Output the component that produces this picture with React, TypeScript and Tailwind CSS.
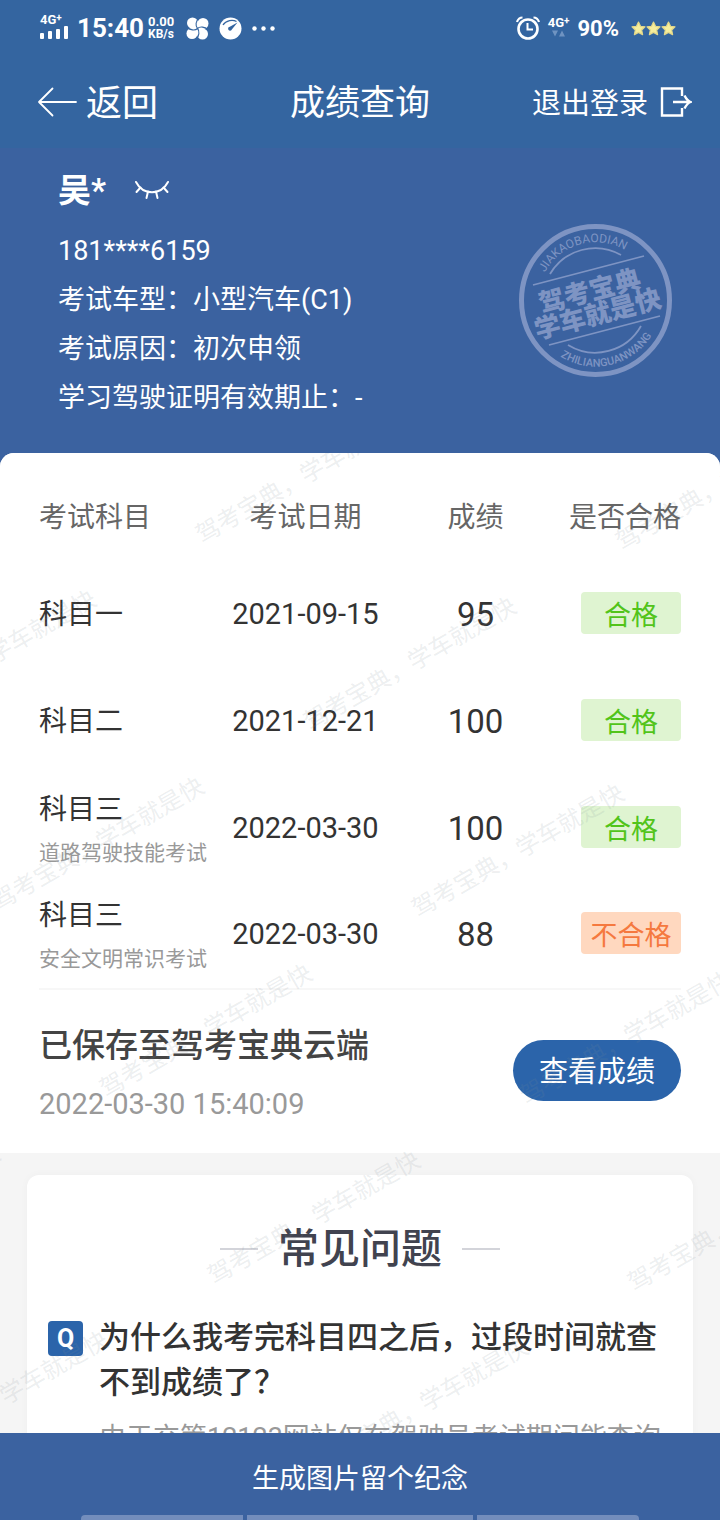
type Result = {
  subject: string;
  note?: string;
  date: string;
  score: number;
  passed: boolean;
};

const results: Result[] = [
  { subject: "科目一", date: "2021-09-15", score: 95, passed: true },
  { subject: "科目二", date: "2021-12-21", score: 100, passed: true },
  {
    subject: "科目三",
    note: "道路驾驶技能考试",
    date: "2022-03-30",
    score: 100,
    passed: true,
  },
  {
    subject: "科目三",
    note: "安全文明常识考试",
    date: "2022-03-30",
    score: 88,
    passed: false,
  },
];

const StatusBar = () => (
  <div className="flex h-14 items-center justify-between pl-10 pr-11 font-bold">
    <div className="flex items-center">
      <div className="flex flex-col pb-1">
        <span className="flex text-[13px] leading-[12px]">
          4G<span className="text-[10px] leading-[8px]">+</span>
        </span>
        <svg width="29" height="13" viewBox="0 0 29 13" fill="currentColor">
          <rect x="0" y="7" width="4" height="6" rx="1" />
          <rect x="8" y="5" width="4" height="8" rx="1" />
          <rect x="16" y="3" width="4" height="10" rx="1" />
          <rect x="24" y="0" width="4" height="13" rx="1" />
        </svg>
      </div>
      <span className="ml-2 text-[26px] leading-8">15:40</span>
      <div className="ml-1 flex flex-col text-[13px] leading-[13px]">
        <span>0.00</span>
        <span className="text-[12px]">KB/s</span>
      </div>
      <svg className="ml-3" width="23" height="23" viewBox="0 0 23 23">
        <g fill="currentColor">
          <circle cx="6.5" cy="6" r="5.5" />
          <circle cx="17" cy="6.5" r="5.5" />
          <circle cx="6" cy="16.5" r="5.5" />
          <circle cx="16.5" cy="17" r="5.5" />
          <rect x="6" y="6" width="11" height="11" />
        </g>
        <path
          d="M11.5 11.5C9 9 10 4 12.5 1M11.5 11.5C14 9 19 10 22 12.5M11.5 11.5C14 14 13 19 10.5 22M11.5 11.5C9 14 4 13 1 10.5"
          fill="none"
          stroke="#3465a0"
          strokeWidth="1.1"
        />
      </svg>
      <svg className="ml-2.5" width="23" height="23" viewBox="0 0 23 23">
        <circle cx="11.5" cy="11.5" r="11" fill="currentColor" />
        <path
          d="M4 8C7 3 14 2.500 17.5 4.5"
          fill="none"
          stroke="#3465a0"
          strokeWidth="1.3"
        />
        <path d="M18.5 5.5L13 12.3A2 2 0 1 1 10.8 9.8Z" fill="#3465a0" />
      </svg>
      <svg className="ml-2.5" width="23" height="5" viewBox="0 0 23 5" fill="currentColor">
        <circle cx="2.5" cy="2.5" r="2.2" />
        <circle cx="11.5" cy="2.5" r="2.2" />
        <circle cx="20.5" cy="2.5" r="2.2" />
      </svg>
    </div>
    <div className="flex items-center">
      <svg
        width="24"
        height="24"
        viewBox="0 0 24 24"
        fill="none"
        stroke="currentColor"
        strokeWidth="2.6"
      >
        <circle cx="12" cy="13" r="9.5" />
        <path d="M11.5 7V13.5H17" strokeWidth="2" />
        <path d="M1 6C2 3 4 1.5 6.5 1.5M23 6C22 3 20 1.5 17.5 1.5" strokeWidth="2.2" />
      </svg>
      <div className="ml-2 flex flex-col items-center pb-1">
        <span className="flex text-[13px] leading-[14px]">
          4G<span className="text-[10px] leading-[9px]">+</span>
        </span>
        <svg width="13" height="7" viewBox="0 0 13 7" fill="#6f93c1">
          <path d="M0 0.5H6L3 6.5ZM7 6.5H13L10 0.5Z" />
        </svg>
      </div>
      <span className="ml-2 pt-0.5 text-[22px] leading-7">90%</span>
      <div className="ml-3 flex">
        {[0, 1, 2].map((star) => (
          <svg key={star} width="15" height="15" viewBox="0 0 15 15">
            <path
              d="M7.5 1L9.5 5.3L14 5.8L10.7 9L11.6 13.6L7.5 11.4L3.4 13.6L4.3 9L1 5.8L5.5 5.3Z"
              fill="#f6ee9c"
              stroke="#e3d88a"
              strokeWidth="1.2"
              strokeLinejoin="round"
            />
          </svg>
        ))}
      </div>
    </div>
  </div>
);

const NavBar = () => (
  <nav className="grid h-[92px] grid-cols-[1fr_auto_1fr] items-center leading-[48px]">
    <button type="button" className="flex items-center gap-2 pl-[37px] text-[36px]">
      <svg
        width="41"
        height="30"
        viewBox="0 0 41 30"
        fill="none"
        stroke="currentColor"
        strokeWidth="1.8"
        strokeLinecap="round"
        strokeLinejoin="round"
      >
        <path d="M39 15H2M15.5 1.5L2 15L15.5 28.5" />
      </svg>
      <span className="pt-1">返回</span>
    </button>
    <h1 className="pt-1 text-[35px]">成绩查询</h1>
    <button
      type="button"
      className="flex items-center gap-3 justify-self-end pr-7 text-[29px]"
    >
      <span className="pt-1">退出登录</span>
      <svg
        width="32"
        height="30"
        viewBox="0 0 32 30"
        fill="none"
        stroke="currentColor"
        strokeWidth="2.4"
      >
        <path d="M22 9V1.5H2V28.5H22V21" />
        <path d="M13 15H30M24.5 8.5C26 11.500 28 14 30.5 15C28 16 26 18.5 24.5 21.5" />
      </svg>
    </button>
  </nav>
);

const Stamp = () => (
  <svg
    className="mt-6 shrink-0"
    width="153"
    height="153"
    viewBox="0 0 153 153"
    aria-hidden="true"
  >
    <defs>
      <path id="stamp-top" d="M25.8 48.4A58 58 0 0 1 122 40" />
      <path id="stamp-bottom" d="M41.5 132.5A66 66 0 0 0 140 95" />
    </defs>
    <g fill="none" stroke="#7e94c3">
      <circle cx="76.5" cy="76.5" r="74" strokeWidth="5" />
      <g strokeWidth="1.8">
        <path d="M14 61L125 32M30 121L141 92" />
        <path d="M31 50A52.5 52.5 0 0 1 102 31M49 121A52.5 52.5 0 0 0 122 102" />
      </g>
    </g>
    <g fill="#7e94c3">
      <text fontSize="12">
        <textPath href="#stamp-top">JIAKAOBAODIAN</textPath>
      </text>
      <text fontSize="11" fontWeight="500">
        <textPath href="#stamp-bottom">ZHILIANGUANWANG</textPath>
      </text>
      <g fontSize="26" fontWeight="900" textAnchor="middle">
        <text transform="translate(73 76) rotate(-14.7)">驾考宝典</text>
        <text transform="translate(81 99) rotate(-14.7)">学车就是快</text>
      </g>
    </g>
  </svg>
);

const Profile = () => (
  <section className="flex items-center justify-between pb-[30px] pl-[58px] pr-12 pt-[5px]">
    <div className="text-[27px] leading-[49px]">
      <div className="flex h-[74px] items-center gap-7">
        <h2 className="text-[33px] font-bold">吴*</h2>
        <button type="button" aria-label="显示姓名">
          <svg
            width="36"
            height="20"
            viewBox="0 0 36 20"
            fill="none"
            stroke="currentColor"
            strokeWidth="2"
            strokeLinecap="round"
          >
            <path d="M2 2C9 15.5 27 15.5 34 2" />
            <path d="M6.5 7.5L2.5 12M14 11.5L12.5 18M22 11.5L23.5 18M29.5 7.5L33.5 12" />
          </svg>
        </button>
      </div>
      <p>181****6159</p>
      <p>考试车型：小型汽车(C1)</p>
      <p>考试原因：初次申领</p>
      <p>学习驾驶证明有效期止：-</p>
    </div>
    <Stamp />
  </section>
);

const ResultsTable = () => (
  <table className="w-full table-fixed border-b-2 border-[#f7f7f7] text-center text-[29px] text-[#333]">
    <thead>
      <tr className="h-[86px] text-[28px] text-[#666]">
        <th className="w-[28%] text-left font-normal">考试科目</th>
        <th className="w-[27%] font-normal">考试日期</th>
        <th className="w-[26%] font-normal">成绩</th>
        <th className="w-[19%] whitespace-nowrap text-right font-normal">是否合格</th>
      </tr>
    </thead>
    <tbody>
      {results.map((result) => (
        <tr key={result.subject + result.note} className="h-[107px]">
          <td className="text-left text-[28px]">
            <div className="leading-[48px]">{result.subject}</div>
            {result.note && (
              <div className="whitespace-nowrap text-[21px] leading-[38px] text-[#999]">
                {result.note}
              </div>
            )}
          </td>
          <td>{result.date}</td>
          <td className="text-[33px]">{result.score}</td>
          <td className="pb-1">
            <span
              className={`ml-auto flex h-[42px] w-[100px] items-center justify-center rounded pt-1.5 text-[27px] leading-9 ${
                result.passed ? "bg-[#dff4d1] text-[#52c41a]" : "bg-[#ffd8bf] text-[#f5793f]"
              }`}
            >
              {result.passed ? "合格" : "不合格"}
            </span>
          </td>
        </tr>
      ))}
    </tbody>
  </table>
);

const SavedBanner = () => (
  <div className="flex items-center justify-between pb-[21px] pt-[18px]">
    <div className="pt-2">
      <h3 className="text-[33px] font-medium leading-[60px] text-[#444]">已保存至驾考宝典云端</h3>
      <p className="text-[29px] leading-[56px] text-[#999]">2022-03-30 15:40:09</p>
    </div>
    <button
      type="button"
      className="h-[61px] w-[168px] rounded-full bg-[#2b64aa] pt-1.5 text-[29px] text-white"
    >
      查看成绩
    </button>
  </div>
);

const Faq = () => (
  <section className="mx-[27px] mt-[22px] rounded-t-xl bg-white px-[21px] pb-10 pt-11 shadow-[0_0_8px_rgba(0,0,0,0.03)]">
    <div className="flex items-center justify-center gap-5">
      <span className="h-0.5 w-[38px] bg-[#d3d4da]" />
      <h2 className="text-[41px] font-medium leading-[60px] text-[#41434f]">常见问题</h2>
      <span className="h-0.5 w-[38px] bg-[#d3d4da]" />
    </div>
    <div className="mt-9 flex gap-4">
      <span className="mt-1.5 flex h-[35px] w-[35px] shrink-0 items-center justify-center rounded bg-[#2b64aa] text-[25px] font-bold text-white">
        Q
      </span>
      <div>
        <h3 className="text-[31px] font-medium leading-[45px] text-[#333]">
          为什么我考完科目四之后，过段时间就查不到成绩了？
        </h3>
        <p className="mt-3 text-[27px] leading-[42px] text-[#999]">
          由于交管12123网站仅在驾驶员考试期间能查询
        </p>
      </div>
    </div>
  </section>
);

// Centre of each mark, on a slanted grid
const marks = Array.from({ length: 24 }, (_, i) => {
  const row = Math.floor(i / 4);
  const col = (i % 4) - 2;
  return { x: 302 + row * 108 + col * 420, y: 24 + row * 187 + col * 7 };
}).filter((mark) => mark.x > -125);

const Watermark = () => (
  <div
    className="pointer-events-none absolute inset-0 select-none overflow-hidden"
    aria-hidden="true"
  >
    {marks.map((mark) => (
      <span
        key={`${mark.x}-${mark.y}`}
        className="absolute -translate-x-1/2 -translate-y-1/2 -rotate-30 whitespace-nowrap text-[24px] leading-8 text-[#7d8c94]/15"
        style={{ left: mark.x, top: mark.y }}
      >
        驾考宝典，学车就是快
      </span>
    ))}
  </div>
);

const App = () => {
  return (
    <div
      lang="zh-CN"
      className="flex h-screen flex-col bg-[#3b62a0] font-[Roboto,'Noto_Sans_CJK_SC',sans-serif] text-white"
    >
      <header className="shrink-0 bg-[#3465a0]">
        <StatusBar />
        <NavBar />
      </header>
      <main className="flex-1 overflow-y-auto [scrollbar-width:none]">
        <Profile />
        <div className="relative overflow-hidden rounded-t-[14px] bg-[#f5f5f5]">
          <section className="bg-white px-[39px] pt-[22px]">
            <ResultsTable />
            <SavedBanner />
          </section>
          <Faq />
          <Watermark />
        </div>
      </main>
      <footer className="shrink-0">
        <button type="button" className="block h-[82px] w-full pt-2.5 text-[27px]">
          生成图片留个纪念
        </button>
        <div className="flex h-[5px] gap-1 px-[81px]">
          <span className="flex-[5] rounded-tl bg-[#738dbc]" />
          <span className="flex-[7] bg-[#738dbc]" />
          <span className="flex-[5] rounded-tr bg-[#738dbc]" />
        </div>
      </footer>
    </div>
  );
};

export default App;
